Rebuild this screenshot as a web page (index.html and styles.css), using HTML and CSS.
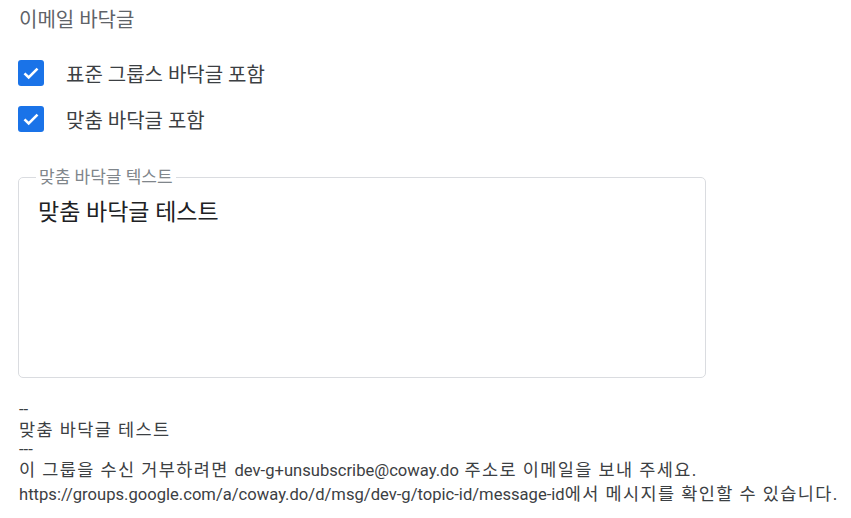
FILE: index.html
```html
<!DOCTYPE html>
<html>
<head>
  <title>이메일 바닥글</title>
  <link rel="stylesheet" href="styles.css">
</head>
<body>
  <div class="footer-settings">
    <h2 class="section-title">이메일 바닥글</h2>

    <label class="check-row">
      <span class="check-box">
        <svg viewBox="0 0 24 24" width="24" height="24"><path d="M5.5 12.3l4.2 4.2L18.5 7.7" fill="none" stroke="#fff" stroke-width="2.6"/></svg>
      </span>
      <span class="check-label">표준 그룹스 바닥글 포함</span>
    </label>

    <label class="check-row">
      <span class="check-box">
        <svg viewBox="0 0 24 24" width="24" height="24"><path d="M5.5 12.3l4.2 4.2L18.5 7.7" fill="none" stroke="#fff" stroke-width="2.6"/></svg>
      </span>
      <span class="check-label">맞춤 바닥글 포함</span>
    </label>

    <fieldset class="text-field">
      <legend>맞춤 바닥글 텍스트</legend>
      <div class="text-value">맞춤 바닥글 테스트</div>
    </fieldset>

    <div class="preview">
      <div class="latin">--</div>
      <div>맞춤 바닥글 테스트</div>
      <div class="latin">---</div>
      <div>이 그룹을 수신 거부하려면 <span class="latin">dev-g+unsubscribe@coway.do</span> 주소로 이메일을 보내 주세요.</div>
      <div class="preview-last"><span class="latin">https://groups.google.com/a/coway.do/d/msg/dev-g/topic-id/message-id</span>에서 메시지를 확인할 수 있습니다.</div>
    </div>
  </div>
</body>
</html>
```

FILE: styles.css
```css
body {
  margin: 0;
  padding: 0;
  background-color: #fff;
  font-family: Roboto, "Noto Sans CJK KR", sans-serif;
  color: #202124;
}

.footer-settings {
  padding: 8px 18px 0 18px;
}

.section-title {
  margin: 0 0 0 1px;
  font-size: 20px;
  font-weight: normal;
  line-height: 24px;
  color: #5f6368;
}

.check-row {
  display: flex;
  align-items: center;
  height: 26px;
  margin-top: 28px;
}

.check-row + .check-row {
  margin-top: 20px;
}

.check-box {
  width: 26px;
  height: 26px;
  border-radius: 3px;
  background-color: #1a73e8;
  display: flex;
  align-items: center;
  justify-content: center;
}

.check-label {
  margin-left: 22px;
  font-size: 20px;
  color: #3c4043;
}

.text-field {
  margin: 35px 0 0 0;
  width: 688px;
  height: 211px;
  box-sizing: border-box;
  border: 1px solid #dadce0;
  border-radius: 5px;
  padding: 6px 19px 0 19px;
}

.text-field legend {
  padding: 0 3px;
  margin-left: -2px;
  font-size: 17px;
  line-height: 20px;
  color: #80868b;
}

.text-value {
  font-size: 23px;
  color: #202124;
}

.preview {
  margin: 22px 0 0 1px;
  font-size: 17.5px;
  line-height: 20px;
  letter-spacing: 1.4px;
  color: #3c4043;
  white-space: nowrap;
}

.preview .latin {
  font-size: 16.6px;
  letter-spacing: 0;
}

.preview-last {
  margin-top: 3px;
}
```
